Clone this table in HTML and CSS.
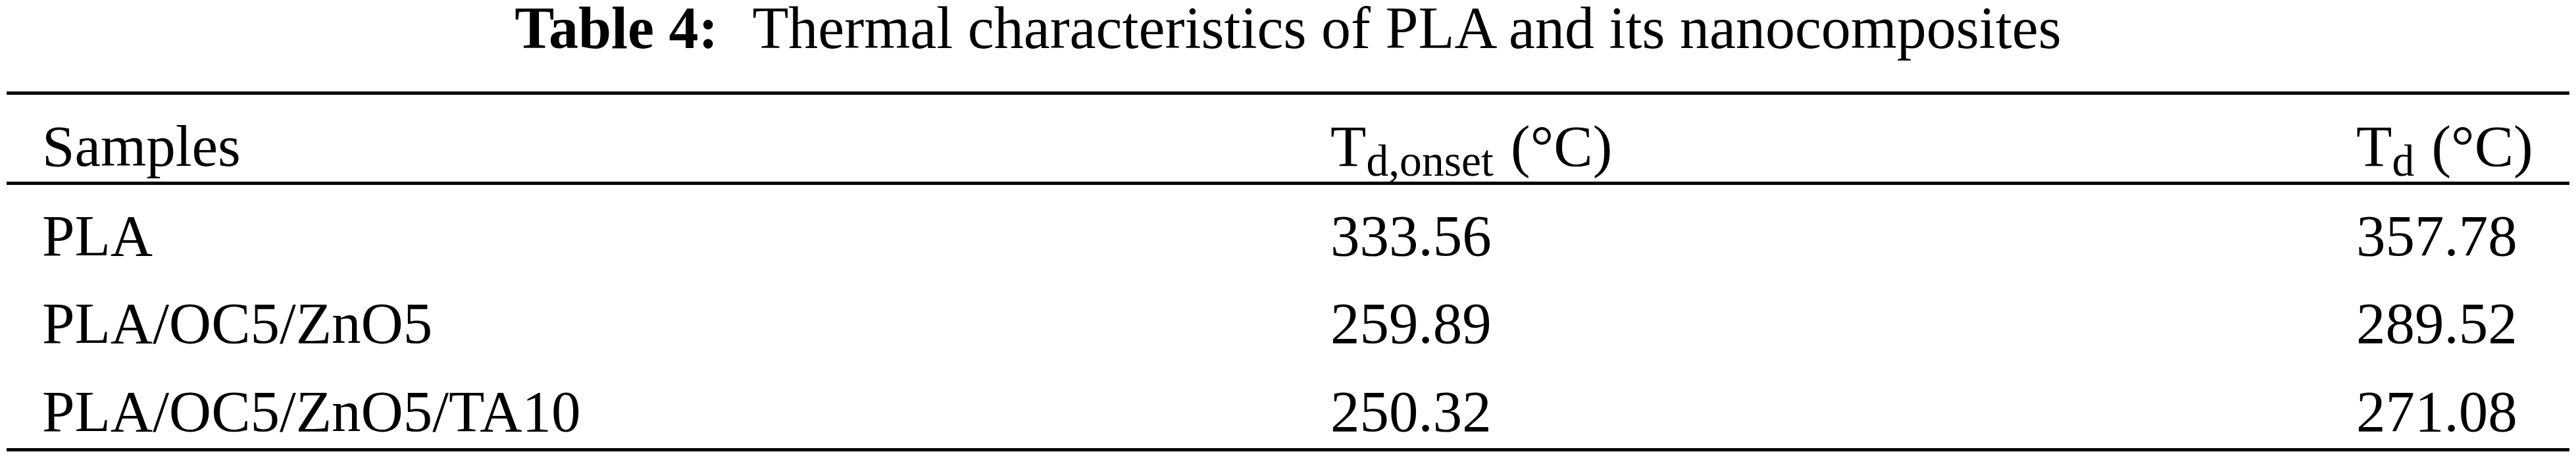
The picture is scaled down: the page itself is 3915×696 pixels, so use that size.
FILE: index.html
```html
<!DOCTYPE html>
<html lang="en">

<head>
  <meta charset="UTF-8">
  <meta name="viewport" content="width=device-width, initial-scale=1.0">
  <title>Table 4: Thermal characteristics of PLA and its nanocomposites</title>
  <link rel="stylesheet" href="styles.css">
</head>

<body>
  <p class="title"><span class="label">Table 4:</span>Thermal characteristics of PLA and its nanocomposites</p>
  <table class="data">
    <colgroup>
      <col class="col-sample">
      <col class="col-onset">
      <col class="col-td">
    </colgroup>
    <thead>
      <tr>
        <th>Samples</th>
        <th>T<sub>d,onset</sub> (°C)</th>
        <th>T<sub>d</sub> (°C)</th>
      </tr>
    </thead>
    <tbody>
      <tr>
        <td>PLA</td>
        <td>333.56</td>
        <td>357.78</td>
      </tr>
      <tr>
        <td>PLA/OC5/ZnO5</td>
        <td>259.89</td>
        <td>289.52</td>
      </tr>
      <tr>
        <td>PLA/OC5/ZnO5/TA10</td>
        <td>250.32</td>
        <td>271.08</td>
      </tr>
    </tbody>
  </table>
</body>

</html>
```

FILE: styles.css
```css
body {
  margin: 0;
  background: #fff;
  color: #000;
  font-family: "Liberation Serif", "Times New Roman", serif;
}

.title {
  margin: 0;
  padding: 0 0 53px 0;
  font-size: 90px;
  line-height: 86px;
  text-align: center;
  white-space: nowrap;
}

.title .label {
  font-weight: bold;
  margin-right: 52px;
}

.data {
  width: 3895px;
  margin-left: 10px;
  table-layout: fixed;
  border-collapse: separate;
  border-spacing: 0;
  border-top: 5px solid #000;
  border-bottom: 5px solid #000;
  font-size: 89px;
  line-height: 89px;
}

.col-sample {
  width: 1958px;
}

.col-onset {
  width: 1559px;
}

.col-td {
  width: 378px;
}

.data th,
.data td {
  text-align: left;
  font-weight: normal;
  white-space: nowrap;
  padding: 33px 0 11.33px 54px;
  vertical-align: top;
}

.data th {
  padding-top: 33.5px;
  padding-bottom: 9.5px;
  border-bottom: 5px solid #000;
}

.data sub {
  font-size: 0.76em;
  line-height: 0;
  vertical-align: -15px;
  margin-right: 4px;
}
```
